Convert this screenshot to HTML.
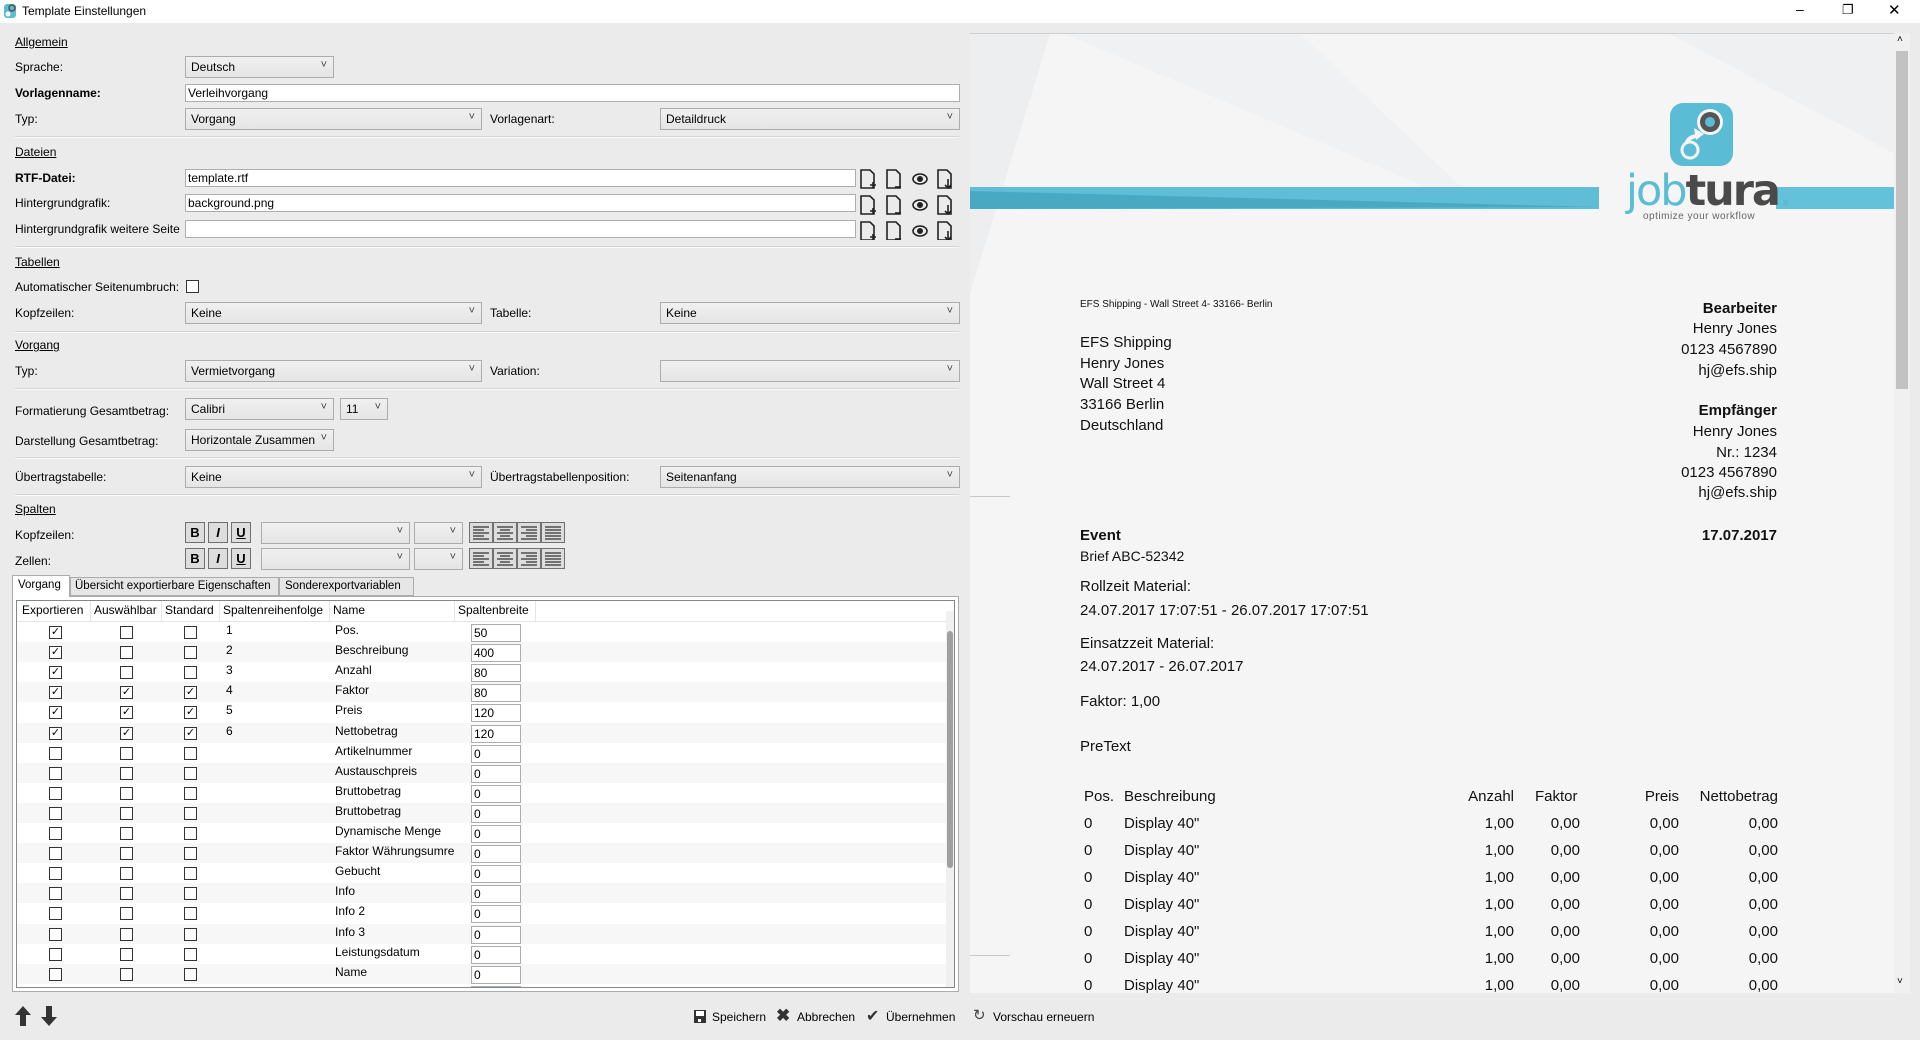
<!DOCTYPE html>
<html><head><meta charset="utf-8"><style>
*{box-sizing:border-box;margin:0;padding:0}
body{width:1920px;height:1040px;background:#ebebeb;font-family:"Liberation Sans",sans-serif;font-size:12px;color:#000;position:relative;overflow:hidden}
.a{position:absolute;white-space:nowrap}
.l{position:absolute;white-space:nowrap;font-size:12px;line-height:16px}
.h{position:absolute;white-space:nowrap;font-size:12px;line-height:16px;text-decoration:underline}
.b{font-weight:bold}
.sel{position:absolute;height:22px;border:1px solid #acacac;background:linear-gradient(#f0f0f0,#e5e5e5);font-size:12px;line-height:20px;padding-left:5px}
.sel:after{content:"˅";position:absolute;right:6px;top:-2px;font-size:11px;color:#444}
.inp{position:absolute;height:18px;border:1px solid #abadb3;background:#fff;font-size:12px;line-height:16px;padding-left:2px}
.sep{position:absolute;left:15px;width:944px;height:2px;border-top:1px solid #d5d5d5;border-bottom:1px solid #fafafa}
.cb{position:absolute;width:13px;height:13px;border:1px solid #333;background:#fff;font-size:11px;line-height:11px;text-align:center}
.btn{position:absolute;width:20px;height:21px;border:1px solid #707070;background:#ddd;font-size:13px;line-height:19px;text-align:center;font-weight:bold}
.pv{position:absolute;white-space:nowrap;font-size:15px;line-height:18px;color:#111}
.r{text-align:right}
</style></head><body>
<div class="a" style="left:0;top:0;width:1920px;height:23px;background:#fff"></div>
<svg class="a" style="left:3px;top:3px" width="14" height="16" viewBox="0 0 14 16"><rect x="1" y="1" width="12" height="14" rx="3" fill="#5bbcd6"/><circle cx="9" cy="5" r="3" fill="none" stroke="#555" stroke-width="1.6"/><circle cx="5" cy="11" r="2.5" fill="#fff"/></svg>
<div class="l" style="left:22px;top:3px">Template Einstellungen</div>
<div class="a" style="left:1796px;top:1px;font-size:14px">–</div>
<div class="a" style="left:1842px;top:2px;font-size:13px">❐</div>
<div class="a" style="left:1888px;top:1px;font-size:15px">✕</div>

<div class="h" style="left:15px;top:34px">Allgemein</div>
<div class="l" style="left:15px;top:59px">Sprache:</div>
<div class="sel" style="left:185px;top:56px;width:149px">Deutsch</div>
<div class="l b" style="left:15px;top:85px">Vorlagenname:</div>
<div class="inp" style="left:185px;top:84px;width:775px">Verleihvorgang</div>
<div class="l" style="left:15px;top:111px">Typ:</div>
<div class="sel" style="left:185px;top:108px;width:297px">Vorgang</div>
<div class="l" style="left:490px;top:111px">Vorlagenart:</div>
<div class="sel" style="left:660px;top:108px;width:300px">Detaildruck</div>
<div class="sep" style="top:136px"></div>

<div class="h" style="left:15px;top:144px">Dateien</div>
<div class="l b" style="left:15px;top:170px">RTF-Datei:</div>
<div class="inp" style="left:185px;top:169px;width:671px">template.rtf</div>
<div class="l" style="left:15px;top:195px">Hintergrundgrafik:</div>
<div class="inp" style="left:185px;top:194px;width:671px">background.png</div>
<div class="l" style="left:15px;top:221px">Hintergrundgrafik weitere Seite</div>
<div class="inp" style="left:185px;top:220px;width:671px"></div>
<svg class="a" style="left:858px;top:168px" width="100" height="72" viewBox="0 0 100 72">
<g fill="none" stroke="#222" stroke-width="1.6">
<g id="ic"><path d="M3 2h9l4 4v14H3z"/><path d="M12 17h6M15 14v6"/>
<path d="M29 2h9l4 4v14H29z"/><path d="M37 19h6"/>
<ellipse cx="62" cy="11" rx="7" ry="5"/><circle cx="62" cy="11" r="2.2" fill="#222"/>
<path d="M80 2h9l4 4v14H80z"/><path d="M90 11v9M87 17l3 3 3-3"/></g>
<use href="#ic" y="26"/><use href="#ic" y="52"/></g></svg>
<div class="sep" style="top:246px"></div>

<div class="h" style="left:15px;top:254px">Tabellen</div>
<div class="l" style="left:15px;top:279px">Automatischer Seitenumbruch:</div>
<div class="cb" style="left:186px;top:280px"></div>
<div class="l" style="left:15px;top:305px">Kopfzeilen:</div>
<div class="sel" style="left:185px;top:302px;width:297px">Keine</div>
<div class="l" style="left:490px;top:305px">Tabelle:</div>
<div class="sel" style="left:660px;top:302px;width:300px">Keine</div>
<div class="sep" style="top:331px"></div>

<div class="h" style="left:15px;top:337px">Vorgang</div>
<div class="l" style="left:15px;top:363px">Typ:</div>
<div class="sel" style="left:185px;top:360px;width:297px">Vermietvorgang</div>
<div class="l" style="left:490px;top:363px">Variation:</div>
<div class="sel" style="left:660px;top:360px;width:300px"></div>
<div class="sep" style="top:388px"></div>

<div class="l" style="left:15px;top:403px">Formatierung Gesamtbetrag:</div>
<div class="sel" style="left:185px;top:398px;width:149px">Calibri</div>
<div class="sel" style="left:340px;top:398px;width:48px">11</div>
<div class="l" style="left:15px;top:433px">Darstellung Gesamtbetrag:</div>
<div class="sel" style="left:185px;top:429px;width:149px">Horizontale Zusammen</div>
<div class="sep" style="top:457px"></div>
<div class="l" style="left:15px;top:469px">Übertragstabelle:</div>
<div class="sel" style="left:185px;top:466px;width:297px">Keine</div>
<div class="l" style="left:490px;top:469px">Übertragstabellenposition:</div>
<div class="sel" style="left:660px;top:466px;width:300px">Seitenanfang</div>
<div class="sep" style="top:494px"></div>

<div class="h" style="left:15px;top:501px">Spalten</div>
<div class="l" style="left:15px;top:527px">Kopfzeilen:</div>
<div class="l" style="left:15px;top:553px">Zellen:</div>
<div class="btn" style="left:185px;top:522px">B</div><div class="btn" style="left:208px;top:522px;font-style:italic">I</div><div class="btn" style="left:231px;top:522px;text-decoration:underline">U</div>
<div class="btn" style="left:185px;top:548px">B</div><div class="btn" style="left:208px;top:548px;font-style:italic">I</div><div class="btn" style="left:231px;top:548px;text-decoration:underline">U</div>
<div class="sel" style="left:261px;top:522px;width:149px"></div><div class="sel" style="left:414px;top:522px;width:49px"></div>
<div class="sel" style="left:261px;top:548px;width:149px"></div><div class="sel" style="left:414px;top:548px;width:49px"></div>
<svg class="a" style="left:469px;top:522px" width="96" height="48" viewBox="0 0 96 48">
<g id="al"><rect x=".5" y=".5" width="23" height="20" fill="#ddd" stroke="#707070"/><rect x="24.5" y=".5" width="23" height="20" fill="#ddd" stroke="#707070"/><rect x="48.5" y=".5" width="23" height="20" fill="#ddd" stroke="#707070"/><rect x="72.5" y=".5" width="23" height="20" fill="#ddd" stroke="#707070"/>
<path stroke="#333" stroke-width="1.3" d="M4 5h16M4 8h11M4 11h16M4 14h11M4 17h16M28 5h16M31 8h10M28 11h16M31 14h10M28 17h16M52 5h16M57 8h11M52 11h16M57 14h11M52 17h16M76 5h16M76 8h16M76 11h16M76 14h16M76 17h16"/></g>
<use href="#al" y="26"/></svg>

<div class="a" style="left:12px;top:575px;width:58px;height:22px;background:#fff;border:1px solid #acacac;border-bottom:none;padding:3px 0 0 5px;z-index:2;font-size:11.5px">Vorgang</div>
<div class="a" style="left:70px;top:577px;width:209px;height:19px;background:#e6e6e6;border:1px solid #acacac;padding:2px 0 0 4px;font-size:11.5px;overflow:hidden">Übersicht exportierbare Eigenschaften</div>
<div class="a" style="left:279px;top:577px;width:135px;height:19px;background:#e6e6e6;border:1px solid #acacac;padding:2px 0 0 5px;font-size:11.5px">Sonderexportvariablen</div>
<div class="a" style="left:12px;top:596px;width:947px;height:396px;border:1px solid #acacac;background:#fff"></div>
<div class="a" style="left:16px;top:600px;width:939px;height:388px;border:1px solid #828790;background:#fff;overflow:hidden">
 <div class="a" style="left:0;top:0;width:930px;height:21px;background:#fff;border-bottom:1px solid #e5e5e5"></div>
 <div class="a" style="left:5px;top:2px">Exportieren</div><div class="a" style="left:77px;top:2px">Auswählbar</div><div class="a" style="left:148px;top:2px">Standard</div><div class="a" style="left:206px;top:2px">Spaltenreihenfolge</div><div class="a" style="left:316px;top:2px">Name</div><div class="a" style="left:441px;top:2px">Spaltenbreite</div>
 <div class="a" style="left:73px;top:0;width:1px;height:21px;background:#e5e5e5"></div><div class="a" style="left:144px;top:0;width:1px;height:21px;background:#e5e5e5"></div><div class="a" style="left:202px;top:0;width:1px;height:21px;background:#e5e5e5"></div><div class="a" style="left:312px;top:0;width:1px;height:21px;background:#e5e5e5"></div><div class="a" style="left:437px;top:0;width:1px;height:21px;background:#e5e5e5"></div><div class="a" style="left:518px;top:0;width:1px;height:21px;background:#e5e5e5"></div>
 <div class="a" style="left:929px;top:10px;width:8px;height:378px;background:#f0f0f0"></div>
 <div class="a" style="left:930px;top:30px;width:6px;height:237px;background:#a0a0a0;border-radius:3px"></div>
 <div id="rows"></div>
</div>

<svg class="a" style="left:14px;top:1005px" width="48" height="22" viewBox="0 0 48 22"><path d="M9 1L1 10h5v11h6V10h5z" fill="#333"/><path d="M35 21l8-9h-5V1h-6v11h-5z" fill="#333"/></svg>
<svg class="a" style="left:693px;top:1009px" width="14" height="15" viewBox="0 0 14 15"><rect x="1" y="1" width="12" height="13" fill="#333"/><rect x="3" y="2" width="8" height="5" fill="#fff"/><rect x="5" y="10" width="3" height="3" fill="#fff"/></svg>
<div class="l" style="left:712px;top:1009px">Speichern</div>
<div class="a" style="left:776px;top:1006px;font-size:17px;font-weight:bold;color:#333">✖</div>
<div class="l" style="left:797px;top:1009px">Abbrechen</div>
<div class="a" style="left:866px;top:1006px;font-size:16px;color:#333">✔</div>
<div class="l" style="left:886px;top:1009px">Übernehmen</div>
<div class="a" style="left:973px;top:1006px;font-size:15px;color:#444">↻</div>
<div class="l" style="left:993px;top:1009px">Vorschau erneuern</div>

<div class="a" style="left:970px;top:33px;width:925px;height:960px;background:#f5f5f5;overflow:hidden;border-top:1px solid #d0d0d0">
 <svg class="a" style="left:0;top:0" width="925" height="300"><polygon points="0,0 80,0 0,260" fill="#eceef0"/><polygon points="95,0 330,0 520,180 " fill="#f0f1f3"/><polygon points="700,0 925,0 925,120" fill="#eef0f2"/></svg>
 <svg class="a" style="left:0;top:153px" width="925" height="24"><polygon points="0,0 629,0 629,22 0,22" fill="#5fbdd7"/><polygon points="0,4 629,20 0,22" fill="#4aa9c2"/><rect x="806" y="0" width="119" height="22" fill="#63c1da"/></svg>
</div>
<div class="a" style="left:970px;top:496px;width:40px;height:1px;background:#c8c8c8"></div>
<div class="a" style="left:970px;top:955px;width:40px;height:1px;background:#c8c8c8"></div>
<div class="a" style="left:1894px;top:33px;width:16px;height:960px;background:#f0f0f0"></div>
<div class="a" style="left:1896px;top:51px;width:12px;height:338px;background:#c2c2c2"></div>
<div class="a" style="left:1897px;top:34px;font-size:10px">˄</div>
<div class="a" style="left:1897px;top:976px;font-size:10px">˅</div>
<svg class="a" style="left:1668px;top:102px" width="68" height="66" viewBox="0 0 68 66"><rect x="2" y="1" width="63" height="63" rx="13" fill="#5bbcd6"/><circle cx="42" cy="20" r="13" fill="#f5f5f5"/><circle cx="42" cy="20" r="10" fill="#555"/><circle cx="42" cy="20" r="5" fill="#5bbcd6"/><path d="M30 34c-10 0-14 8-12 16" stroke="#f5f5f5" stroke-width="4" fill="none"/><path d="M26 26l10 6-8 6" fill="#f5f5f5"/><circle cx="22" cy="48" r="8" fill="#5bbcd6" stroke="#f5f5f5" stroke-width="3"/></svg>
<div class="a" style="left:1626px;top:166px;font-size:43px;letter-spacing:-2px;line-height:50px;font-family:'DejaVu Sans',sans-serif"><span style="color:#5bbcd6">job</span><span style="color:#4a4a4a;font-weight:bold">tura</span><span style="color:#5bbcd6">.</span></div>
<div class="a" style="left:1643px;top:211px;font-size:10px;color:#666;letter-spacing:.5px">optimize your workflow</div>

<div class="a" style="left:1080px;top:299px;font-size:10px;color:#111">EFS Shipping - Wall Street 4- 33166- Berlin</div>
<div class="pv" style="left:1080px;top:334px">EFS Shipping</div>
<div class="pv" style="left:1080px;top:355px">Henry Jones</div>
<div class="pv" style="left:1080px;top:375px">Wall Street 4</div>
<div class="pv" style="left:1080px;top:396px">33166 Berlin</div>
<div class="pv" style="left:1080px;top:417px">Deutschland</div>
<div class="pv r b" style="right:143px;top:300px">Bearbeiter</div>
<div class="pv r" style="right:143px;top:320px">Henry Jones</div>
<div class="pv r" style="right:143px;top:341px">0123 4567890</div>
<div class="pv r" style="right:143px;top:362px">hj@efs.ship</div>
<div class="pv r b" style="right:143px;top:402px">Empfänger</div>
<div class="pv r" style="right:143px;top:423px">Henry Jones</div>
<div class="pv r" style="right:143px;top:444px">Nr.: 1234</div>
<div class="pv r" style="right:143px;top:464px">0123 4567890</div>
<div class="pv r" style="right:143px;top:484px">hj@efs.ship</div>
<div class="pv b" style="left:1080px;top:527px">Event</div>
<div class="pv r b" style="right:143px;top:527px">17.07.2017</div>
<div class="pv" style="left:1080px;top:547px;font-size:14px">Brief ABC-52342</div>
<div class="pv" style="left:1080px;top:578px">Rollzeit Material:</div>
<div class="pv" style="left:1080px;top:602px">24.07.2017 17:07:51 - 26.07.2017 17:07:51</div>
<div class="pv" style="left:1080px;top:635px">Einsatzzeit Material:</div>
<div class="pv" style="left:1080px;top:658px">24.07.2017 - 26.07.2017</div>
<div class="pv" style="left:1080px;top:693px">Faktor: 1,00</div>
<div class="pv" style="left:1080px;top:738px">PreText</div>
<div class="pv" style="left:1084px;top:788px">Pos.</div>
<div class="pv" style="left:1124px;top:788px">Beschreibung</div>
<div class="pv r" style="right:406px;top:788px">Anzahl</div>
<div class="pv" style="left:1535px;top:788px">Faktor</div>
<div class="pv r" style="right:241px;top:788px">Preis</div>
<div class="pv r" style="right:142px;top:788px">Nettobetrag</div>
<div id="pt"></div>
<script>
var names=[["1","Pos.","50",1,0,0],["2","Beschreibung","400",1,0,0],["3","Anzahl","80",1,0,0],["4","Faktor","80",1,1,1],["5","Preis","120",1,1,1],["6","Nettobetrag","120",1,1,1],["","Artikelnummer","0"],["","Austauschpreis","0"],["","Bruttobetrag","0"],["","Bruttobetrag","0"],["","Dynamische Menge","0"],["","Faktor Währungsumre","0"],["","Gebucht","0"],["","Info","0"],["","Info 2","0"],["","Info 3","0"],["","Leistungsdatum","0"],["","Name","0"],["","Netto/Brutto","0"]];
var h="";
names.forEach(function(r,i){var t=21+i*20.1;
h+='<div class="a" style="left:0;top:'+t+'px;width:929px;height:20px;background:'+(i%2?'#f7f7f7':'#fff')+'"></div>';
[32,103,167].forEach(function(x,k){h+='<div class="cb" style="left:'+x+'px;top:'+(t+4)+'px">'+(r[3+k]?'✓':'')+'</div>';});
h+='<div class="a" style="left:209px;top:'+(t+1)+'px">'+r[0]+'</div><div class="a" style="left:318px;top:'+(t+1)+'px">'+r[1]+'</div><div class="inp" style="left:454px;top:'+(t+2)+'px;width:50px">'+r[2]+'</div>';});
document.getElementById("rows").innerHTML=h;
var p="";for(var i=0;i<7;i++){var t=815+i*27;
p+='<div class="pv" style="left:1084px;top:'+t+'px">0</div><div class="pv" style="left:1124px;top:'+t+'px">Display 40"</div><div class="pv r" style="right:406px;top:'+t+'px">1,00</div><div class="pv r" style="right:340px;top:'+t+'px">0,00</div><div class="pv r" style="right:241px;top:'+t+'px">0,00</div><div class="pv r" style="right:142px;top:'+t+'px">0,00</div>';}
document.getElementById("pt").innerHTML=p;
</script>
</body></html>
